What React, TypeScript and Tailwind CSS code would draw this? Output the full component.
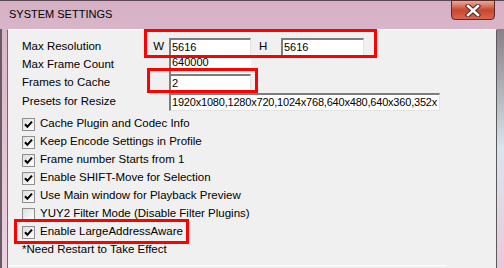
import React from 'react';

const fieldCls =
  'h-[18px] bg-white border-t-2 border-l-2 border-t-[#7d7d7d] border-l-[#7d7d7d] border-r border-b border-r-[#e3e3e3] border-b-[#e3e3e3] pl-px overflow-hidden whitespace-nowrap text-[11px] leading-[15px] text-black';

const CheckBox = ({ checked }: { checked: boolean }) => (
  <span className="w-[13px] h-[13px] shrink-0 border border-[#8e8f8f] bg-gradient-to-br from-[#dedede] to-white flex items-center justify-center">
    {checked && (
      <svg width="9" height="9" viewBox="0 0 9 9">
        <path d="M1 4.2 L3.4 6.8 L8 1.6" stroke="#000" strokeWidth="2" fill="none" />
      </svg>
    )}
  </span>
);

const options = [
  { label: 'Cache Plugin and Codec Info', checked: true },
  { label: 'Keep Encode Settings in Profile', checked: true },
  { label: 'Frame number Starts from 1', checked: true },
  { label: 'Enable SHIFT-Move for Selection', checked: true },
  { label: 'Use Main window for Playback Preview', checked: true },
  { label: 'YUY2 Filter Mode (Disable Filter Plugins)', checked: false },
  { label: 'Enable LargeAddressAware', checked: true },
];

export default function App() {
  return (
    <div className="relative w-[504px] h-[268px] overflow-hidden flex flex-col bg-gradient-to-b from-[#d6b1c5] to-[#ecd1e0] font-['Liberation_Sans',Arial,sans-serif] text-black">
      {/* title bar */}
      <div className="h-[29px] flex items-start shrink-0 border-t border-[#5e4a55]">
        <span className="ml-[9px] mt-[6px] text-[11px] leading-[14px] text-black">SYSTEM SETTINGS</span>
        <div className="ml-auto mr-[9px] -mt-px w-[44px] h-[20px] rounded-b-[4px] border border-[#5a2a2a] bg-gradient-to-b from-[#e9a898] via-[#c9452f] to-[#d8664c] flex items-center justify-center">
          <svg width="16" height="13" viewBox="0 0 16 13">
            <path d="M3 2 L13 11 M13 2 L3 11" stroke="#4a2a2a" strokeWidth="4.5" strokeLinecap="square" />
            <path d="M3 2 L13 11 M13 2 L3 11" stroke="#ffffff" strokeWidth="2.5" strokeLinecap="square" />
          </svg>
        </div>
      </div>

      <div className="flex flex-1">
        <div className="w-[7px] shrink-0 border-l-2 border-[#6a5a64]" />
        <div className="w-[490px] shrink-0 bg-[#f0f0f0] border-l border-t border-l-[#6b6b6b] border-t-white border-r border-r-[#5a5a5a] pl-[14px] pt-[8px] flex flex-col text-[11.5px]">
          {/* form rows */}
          <div className="flex items-center h-[18px]">
            <span className="w-[147px] flex justify-between pr-[5px]">
              <span>Max Resolution</span>
              <span>W</span>
            </span>
            <div className={`${fieldCls} w-[82px]`}>5616</div>
            <span className="ml-[8px] w-[22px]">H</span>
            <div className={`${fieldCls} w-[83px]`}>5616</div>
          </div>
          <div className="flex items-center h-[18px]">
            <span className="w-[147px]">Max Frame Count</span>
            <div className="w-[82px] h-[18px] bg-white border-l-2 border-[#7d7d7d] pl-px text-[11px] leading-[13px]">640000</div>
          </div>
          <div className="flex items-center h-[18px]">
            <span className="w-[147px]">Frames to Cache</span>
            <div className={`${fieldCls} w-[82px]`}>2</div>
          </div>
          <div className="flex items-center h-[18px] mt-px">
            <span className="w-[147px]">Presets for Resize</span>
            <div className={`${fieldCls} w-[271px] tracking-[-0.2px]`}>1920x1080,1280x720,1024x768,640x480,640x360,352x</div>
          </div>

          {/* checkboxes */}
          <div className="mt-[4px] flex flex-col">
            {options.map((o) => (
              <div key={o.label} className="flex items-center h-[18px] gap-[5px]">
                <CheckBox checked={o.checked} />
                <span className="whitespace-nowrap">{o.label}</span>
              </div>
            ))}
            <div className="h-[18px] flex items-center">*Need Restart to Take Effect</div>
          </div>
          <div className="-ml-[14px] mt-[6px] w-[438px] h-px bg-[#a0a0a0] border-b border-white" />
        </div>
        <div className="flex-1 bg-gradient-to-b from-[#8a7f86] via-[#d8e6ee] to-[#e8c8dc]" />
      </div>

      {/* highlight boxes */}
      <div className="absolute left-[144px] top-[29px] w-[233px] h-[29px] border-[3px] border-[#ff0000]" />
      <div className="absolute left-[147px] top-[68px] w-[111px] h-[25px] border-[3px] border-[#ff0000]" />
      <div className="absolute left-[14px] top-[219px] w-[175px] h-[25px] border-[3px] border-[#ff0000]" />
    </div>
  );
}
